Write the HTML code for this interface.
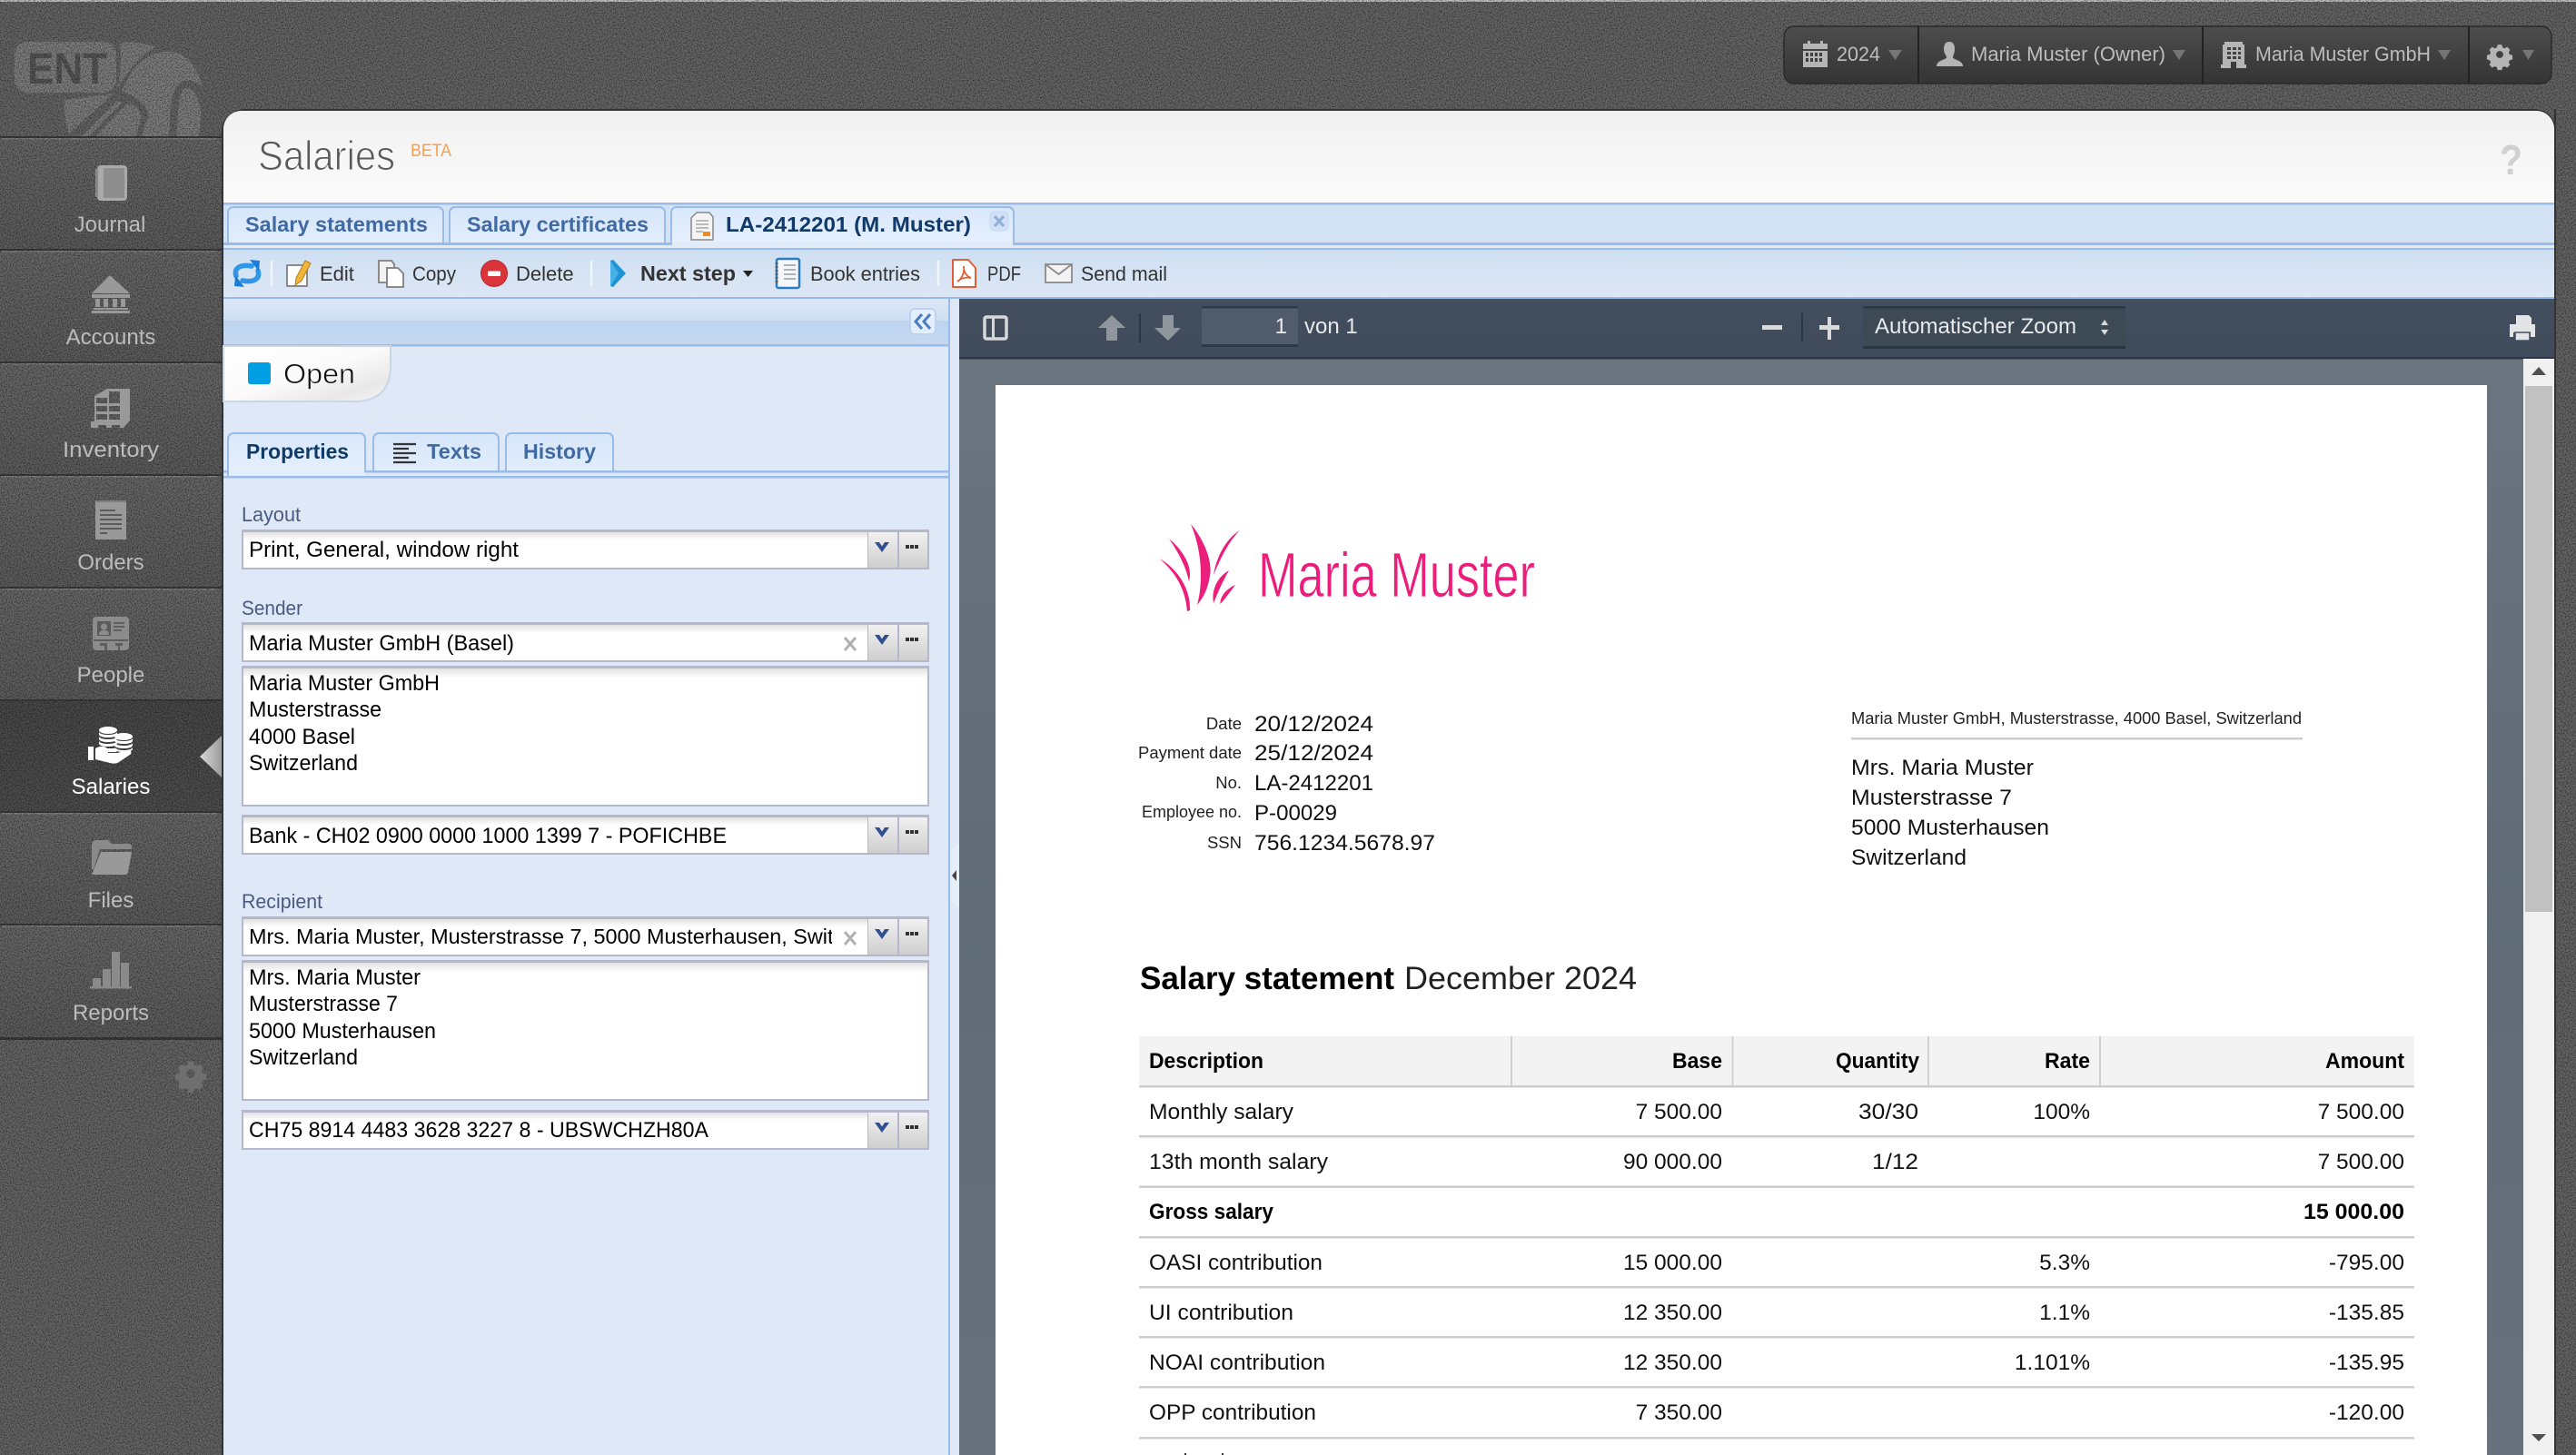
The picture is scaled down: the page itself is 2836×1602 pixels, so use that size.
<!DOCTYPE html>
<html lang="en">
<head>
<meta charset="utf-8">
<title>Salaries</title>
<style>
html,body{margin:0;padding:0;background:#555;width:2836px;height:1602px;overflow:hidden}
svg{display:block}
text{font-family:"Liberation Sans",sans-serif;white-space:pre}
.nav{font-size:24px;fill:#bcbcbc;text-anchor:middle}
.tb{font-size:22px;fill:#333}
.top{font-size:22px;fill:#bdbdbd}
.tab{font-size:23px;font-weight:bold;fill:#416aa3}
.lbl{font-size:22px;fill:#4a5a80}
.f{font-size:24px;fill:#000}
.pdf{font-size:24px;fill:#e8eaec}
.d{font-size:24.5px;fill:#111}
.r{font-size:24.5px;fill:#111;text-anchor:end}
.b{font-weight:bold;fill:#000}
.sm{font-size:18.5px;fill:#222;text-anchor:end}
</style>
</head>
<body>
<svg xmlns="http://www.w3.org/2000/svg" width="2836" height="1602" viewBox="0 0 2836 1602">
<defs>
<filter id="n" x="0" y="0" width="100%" height="100%"><feTurbulence type="fractalNoise" baseFrequency="0.7" numOctaves="2" seed="3"/><feColorMatrix values="0 0 0 0 0 0 0 0 0 0 0 0 0 0 0 0 0 0 1.2 -0.45"/></filter>
<linearGradient id="item" x1="0" y1="0" x2="0" y2="1"><stop offset="0" stop-color="#6a6a6a"/><stop offset="1" stop-color="#5e5e5e"/></linearGradient>
<linearGradient id="itemA" x1="0" y1="0" x2="0" y2="1"><stop offset="0" stop-color="#4a4a4a"/><stop offset="1" stop-color="#505050"/></linearGradient>
<linearGradient id="bar" x1="0" y1="0" x2="0" y2="1"><stop offset="0" stop-color="#4d4d4d"/><stop offset="1" stop-color="#343434"/></linearGradient>
<linearGradient id="hd" x1="0" y1="0" x2="0" y2="1"><stop offset="0" stop-color="#f1f1f1"/><stop offset=".5" stop-color="#f6f6f6"/><stop offset="1" stop-color="#fbfbfb"/></linearGradient>
<linearGradient id="tabg" x1="0" y1="0" x2="0" y2="1"><stop offset="0" stop-color="#d6e5f9"/><stop offset="1" stop-color="#e2eefd"/></linearGradient>
<linearGradient id="tabA" x1="0" y1="0" x2="0" y2="1"><stop offset="0" stop-color="#d9e8fb"/><stop offset="1" stop-color="#e6f0fe"/></linearGradient>
<linearGradient id="tool" x1="0" y1="0" x2="0" y2="1"><stop offset="0" stop-color="#cfdff2"/><stop offset="1" stop-color="#dce7f5"/></linearGradient>
<linearGradient id="h1" x1="0" y1="0" x2="0" y2="1"><stop offset="0" stop-color="#dbe7f6"/><stop offset="1" stop-color="#cfdff3"/></linearGradient>
<linearGradient id="h2" x1="0" y1="0" x2="0" y2="1"><stop offset="0" stop-color="#bdd3ee"/><stop offset="1" stop-color="#c5d9f1"/></linearGradient>
<linearGradient id="pill" x1="0" y1="0" x2="1" y2="1"><stop offset="0" stop-color="#fff"/><stop offset=".5" stop-color="#fafafa"/><stop offset=".8" stop-color="#e8e8e8"/><stop offset="1" stop-color="#f6f6f6"/></linearGradient>
<linearGradient id="inp" x1="0" y1="0" x2="0" y2="1"><stop offset="0" stop-color="#e2e2e2"/><stop offset=".22" stop-color="#fff"/><stop offset="1" stop-color="#fff"/></linearGradient>
<linearGradient id="ta" x1="0" y1="0" x2="0" y2="1"><stop offset="0" stop-color="#e2e2e2"/><stop offset=".07" stop-color="#fff"/><stop offset="1" stop-color="#fff"/></linearGradient>
<linearGradient id="btn" x1="0" y1="0" x2="0" y2="1"><stop offset="0" stop-color="#f1f1f1"/><stop offset="1" stop-color="#cfcfcf"/></linearGradient>
<linearGradient id="pv" x1="0" y1="0" x2="0" y2="1"><stop offset="0" stop-color="#6b757f"/><stop offset=".5" stop-color="#606b76"/><stop offset="1" stop-color="#68727c"/></linearGradient>
<linearGradient id="pt" x1="0" y1="0" x2="0" y2="1"><stop offset="0" stop-color="#434f5f"/><stop offset="1" stop-color="#3f4b5a"/></linearGradient>
<linearGradient id="arrow" x1="0" y1="0" x2="1" y2="0"><stop offset="0" stop-color="#d8d8d8"/><stop offset="1" stop-color="#9c9c9c"/></linearGradient>
<clipPath id="rc"><rect x="270" y="1012" width="646" height="38"/></clipPath>
<g id="fld">
<rect x="266" y="0" width="757" height="44" fill="#b5b8cc"/>
<rect x="268" y="3" width="687" height="39" fill="url(#inp)"/>
<rect x="956" y="3" width="32" height="39" fill="url(#btn)"/>
<rect x="990" y="3" width="31" height="39" fill="url(#btn)"/>
<path d="M963 14l8 11 8-11h-5l-3 4.500-3-4.500z" fill="#2f4f8f"/>
<path d="M997 17h4v4h-4zM1002 17h4v4h-4zM1007 17h4v4h-4z" fill="#333"/>
</g>
<g id="gear">
<path d="M-3-14h6l1 4 3 1.300 3.500-2 4.200 4.200-2 3.500 1.300 3 4 1v6l-4 1-1.300 3 2 3.500-4.200 4.200-3.500-2-3 1.300-1 4h-6l-1-4-3-1.300-3.500 2-4.200-4.200 2-3.500-1.300-3-4-1v-6l4-1 1.300-3-2-3.500 4.200-4.200 3.500 2 3-1.300zM0-5a5 5 0 1 0 .01 0z" fill-rule="evenodd"/>
</g>
</defs>

<!-- Background -->
<rect width="2836" height="1602" fill="#676767"/>
<rect width="2836" height="2" fill="#c8c8c8"/>

<!-- Logo -->
<g fill="#808080">
<rect x="16" y="46" width="112" height="56" rx="14"/>
<path d="M132 47C148 45 162 48 172 52C156 60 146 72 138 84L129 97C133 82 134 62 132 47z"/>
<path d="M143 82C152 66 170 56 187 57C205 58 216 70 223 96C216 90 208 86 200 90C190 96 188 112 187 128L186 156H154L163 127C164 118 152 108 134 100z"/>
<path d="M205 97C214 97 220 108 221 125L219 156H194L196 122C197 108 199 99 205 97z"/>
<path d="M71 110L125 103L76 147C72 136 70 122 71 110z"/>
<path d="M84 156L130 110L134 114L92 156z"/>
<path d="M100 156L138 116C146 112 154 120 156 128L148 156z"/>
</g>
<text x="30" y="92" font-size="48" font-weight="bold" fill="#585858" textLength="88" lengthAdjust="spacingAndGlyphs">ENT</text>

<!-- Sidebar items -->
<g>
<rect x="0" y="152" width="244" height="124" fill="url(#item)"/>
<rect x="0" y="276" width="244" height="124" fill="url(#item)"/>
<rect x="0" y="400" width="244" height="124" fill="url(#item)"/>
<rect x="0" y="524" width="244" height="124" fill="url(#item)"/>
<rect x="0" y="648" width="244" height="124" fill="url(#item)"/>
<rect x="0" y="772" width="244" height="123" fill="url(#itemA)"/>
<rect x="0" y="895" width="244" height="124" fill="url(#item)"/>
<rect x="0" y="1019" width="244" height="124" fill="url(#item)"/>
<g fill="#3c3c3c">
<rect y="150" width="244" height="2"/><rect y="274" width="244" height="2"/><rect y="398" width="244" height="2"/><rect y="522" width="244" height="2"/><rect y="646" width="244" height="2"/><rect y="770" width="244" height="2"/><rect y="893" width="244" height="2"/><rect y="1017" width="244" height="2"/><rect y="1142" width="244" height="3"/>
</g>
<g fill="#858585">
<rect x="2" y="152" width="237" height="1.500"/><rect x="2" y="276" width="237" height="1.500"/><rect x="2" y="400" width="237" height="1.500"/><rect x="2" y="524" width="237" height="1.500"/><rect x="2" y="648" width="237" height="1.500"/><rect x="2" y="895" width="237" height="1.500"/><rect x="2" y="1019" width="237" height="1.500"/>
</g>
</g>

<!-- Noise -->
<rect width="2836" height="1602" filter="url(#n)"/>

<!-- Sidebar icons -->
<g fill="#999">
<rect x="107" y="182" width="33" height="39" rx="4" fill="#aaa"/>
<rect x="114" y="185" width="23" height="33" fill="#8e8e8e"/>
<path d="M105 186h3v31h-3z" fill="#888"/>
<path d="M121 303l22 20h-42zM101 324h42v4h-42zM105 329h5v9h-5zM114 329h5v9h-5zM124 329h5v9h-5zM133 329h5v9h-5zM103 339h38v2h-38zM101 342h42v3h-42z"/>
<path d="M104 436l14-8 25 0v30l-7 6h-32zM106 438v6h12v-6zM120 431v13h12v-13zM106 447v6h12v-6zM120 447v6h12v-6zM106 456v6h12v-6zM120 456v6h12v-6z" fill-rule="evenodd"/>
<path d="M100 464h36l7-8v7l-7 8h-4v-3h-9v3h-6v-3h-9v3h-8z"/>
<rect x="105" y="553" width="34" height="41"/>
<path d="M105 551h34v3h-34z" opacity=".6"/>
<path d="M110 561h17v2h-17zM110 566h24v2h-24zM110 571h24v2h-24zM110 576h24v2h-24zM110 581h24v2h-24zM110 586h8v2h-8z" fill="#5a5a5a"/>
<path d="M106 679h32a4 4 0 0 1 4 4v29a4 4 0 0 1-4 4H106a4 4 0 0 1-4-4V683a4 4 0 0 1 4-4z" fill="#8c8c8c"/>
<rect x="107" y="684" width="15" height="16" fill="#5b5b5b"/>
<circle cx="114.500" cy="690" r="3.500" fill="#8c8c8c"/>
<path d="M109 699c0-4 2-5 5.500-5s5.500 1 5.500 5z" fill="#8c8c8c"/>
<path d="M125 685h12v2h-12zM125 689h12v2h-12zM125 693h9v2h-9zM103 704h38v2h-38zM110 708h8v8h-3v-5h-5zM127 708h8v3h-3v5h-2v-5h-3z" fill="#5e5e5e"/>
<path d="M101 930a5 5 0 0 1 5-5h13l4 4h19a3 3 0 0 1 3 3v3H110l-7 22h-2z" fill="#8a8a8a"/>
<path d="M111 938h34l-4 22a3 3 0 0 1-3 3H101z" fill="#999"/>
<path d="M102 1077h9v9h-9zM113 1067h9v19h-9zM123 1048h9v38h-9zM133 1060h9v26h-9zM99 1086h46v2.500H99z" fill="#8a8a8a"/>
</g>
<!-- Salaries icon -->
<g fill="#fff">
<ellipse cx="119" cy="804" rx="10" ry="4"/>
<path d="M109 806c1 2 5 3 10 3s9-1 10-3v3c-1 2-5 3-10 3s-9-1-10-3zM109 811c1 2 5 3 10 3s9-1 10-3v3c-1 2-5 3-10 3s-9-1-10-3zM109 816c1 2 5 3 10 3s9-1 10-3v3c-1 2-5 3-10 3s-9-1-10-3z"/>
<ellipse cx="136" cy="811" rx="10" ry="4"/>
<path d="M126 813c1 2 5 3 10 3s9-1 10-3v3c-1 2-5 3-10 3s-9-1-10-3zM126 818c1 2 5 3 10 3s9-1 10-3v3c-1 2-5 3-10 3s-9-1-10-3zM126 823c1 2 5 3 10 3s9-1 10-3v2c-1 2-5 3-10 3s-9-1-10-3z"/>
<rect x="97" y="822" width="6" height="15"/>
<path d="M105 824c5-3 10-3 13 0h9c3 0 3 4 0 4h-8v1h10l11-3c4-1 6 3 3 5l-12 8c-3 2-6 2-10 1l-16-4z"/>
</g>
<!-- active arrow -->
<path d="M244 810v46l-24-23z" fill="url(#arrow)"/>
<!-- sidebar labels -->
<text class="nav" x="121" y="255">Journal</text>
<text class="nav" x="122" y="379">Accounts</text>
<text class="nav" x="122" y="503" textLength="106" lengthAdjust="spacingAndGlyphs">Inventory</text>
<text class="nav" x="122" y="627">Orders</text>
<text class="nav" x="122" y="751">People</text>
<text class="nav" x="122" y="874" style="fill:#fff">Salaries</text>
<text class="nav" x="122" y="999">Files</text>
<text class="nav" x="122" y="1123">Reports</text>
<use href="#gear" fill="#6f6f6f" transform="translate(210 1182) scale(.95)"/>

<!-- Top right bar -->
<rect x="1964" y="29" width="845" height="63" rx="11" fill="url(#bar)" stroke="#2a2a2a" stroke-width="1.500"/>
<path d="M2112 29v63M2425 29v63M2718 29v63" stroke="#222" stroke-width="2"/>
<g fill="#b5b5b5">
<path d="M1985 48h5v-3h3v3h11v-3h3v3h5v6h-27z"/>
<path d="M1985 56h27v18h-27zM1988 58v4h3v-4zM1993 58v4h3v-4zM1998 58v4h3v-4zM2003 58v4h3v-4zM1988 64v4h3v-4zM1993 64v4h3v-4zM1998 64v4h3v-4zM2003 64v4h3v-4z" fill-rule="evenodd"/>
<path d="M2146 46c4 0 6 3 6 8 0 5-2 7-2 9 0 3 11 3 11 10h-29c0-7 11-7 11-10 0-2-3-4-3-9 0-5 2-8 6-8z"/>
<path d="M2449 46h20v3h2v22h2v4h-28v-4h2V49h2zM2452 52v3h4v-3zM2458 52v3h4v-3zM2464 52v3h3v-3zM2452 57v3h4v-3zM2458 57v3h4v-3zM2464 57v3h3v-3zM2452 62v3h4v-3zM2458 62v3h4v-3zM2464 62v3h3v-3zM2456 68v7h6v-7z" fill-rule="evenodd"/>
</g>
<use href="#gear" fill="#b5b5b5" transform="translate(2752 60) scale(.78)"/>
<g fill="#757575">
<path d="M2079 55h15l-7.500 11zM2392 55h14l-7 11zM2684 55h14l-7 11zM2777 55h13l-6.500 11z"/>
</g>
<text class="top" x="2022" y="67" textLength="48" lengthAdjust="spacingAndGlyphs">2024</text>
<text class="top" x="2170" y="67" textLength="214" lengthAdjust="spacingAndGlyphs">Maria Muster (Owner)</text>
<text class="top" x="2483" y="67" textLength="193" lengthAdjust="spacingAndGlyphs">Maria Muster GmbH</text>

<!-- Main panel -->
<path d="M244 150V1602h2570V144a24 24 0 0 0-24-24H270a26 26 0 0 0-26 30z" fill="#333"/>
<path d="M246 142a20 20 0 0 1 20-20H2792a20 20 0 0 1 20 20V1602H246z" fill="#dfe8f6"/>
<path d="M246 223V142a20 20 0 0 1 20-20H2792a20 20 0 0 1 20 20v81z" fill="url(#hd)"/>
<text x="284" y="187" font-size="45" fill="#5a5a5a" stroke="#f6f6f6" stroke-width="1.100" textLength="151" lengthAdjust="spacingAndGlyphs">Salaries</text>
<text x="452" y="172" font-size="19" fill="#f9a050" textLength="45" lengthAdjust="spacingAndGlyphs">BETA</text>
<text x="2752" y="192" font-size="46" font-weight="bold" fill="#d0d0d0" textLength="25" lengthAdjust="spacingAndGlyphs">?</text>

<!-- Tab strip -->
<rect x="246" y="223" width="2566" height="50" fill="#d3e2f5"/>
<rect x="246" y="223" width="2566" height="2.500" fill="#99bce8"/>
<rect x="246" y="267" width="2566" height="3" fill="#99bce8"/>
<rect x="246" y="270" width="2566" height="3" fill="#e1ecfb"/>
<rect x="246" y="273" width="2566" height="2.500" fill="#99bce8"/>
<path d="M251 268V234a6 6 0 0 1 6-6H482a6 6 0 0 1 6 6v34z" fill="url(#tabg)" stroke="#99bce8" stroke-width="2"/>
<path d="M495 268V234a6 6 0 0 1 6-6H726a6 6 0 0 1 6 6v34z" fill="url(#tabg)" stroke="#99bce8" stroke-width="2"/>
<path d="M739 270V234a6 6 0 0 1 6-6H1110a6 6 0 0 1 6 6v35" fill="url(#tabA)" stroke="#99bce8" stroke-width="2"/>
<rect x="740" y="266" width="375" height="6" fill="#e1ecfb"/>
<text class="tab" x="270" y="255" textLength="201" lengthAdjust="spacingAndGlyphs">Salary statements</text>
<text class="tab" x="514" y="255" textLength="200" lengthAdjust="spacingAndGlyphs">Salary certificates</text>
<text class="tab" x="799" y="255" style="fill:#123a68" textLength="270" lengthAdjust="spacingAndGlyphs">LA-2412201 (M. Muster)</text>
<!-- tab doc icon -->
<path d="M767 234h14l4 5v25h-24V240z" fill="#f4f4f4" stroke="#888" stroke-width="1.500"/>
<path d="M766 243h14M766 247h14M766 251h14M766 255h8" stroke="#999" stroke-width="1.300"/>
<rect x="774" y="255" width="8" height="5" fill="#f08a1e"/>
<rect x="1090" y="233" width="20" height="21" rx="5" fill="#d0e0f6" stroke="#c6d8f0"/>
<path d="M1095 238l10 11M1105 238l-10 11" stroke="#8fb0dd" stroke-width="3"/>

<!-- Toolbar -->
<rect x="246" y="275" width="2566" height="52" fill="url(#tool)"/>
<rect x="246" y="327" width="2566" height="2.500" fill="#99bce8"/>
<!-- refresh -->
<g fill="none" stroke="#2f97e6" stroke-width="5.500" stroke-linecap="round">
<path d="M260 304C257 294 266 291 277 293"/>
<path d="M284 298C287 308 278 311 267 309"/>
</g>
<path d="M275 286l11 1-1 12zM269 316l-11-1 1-12z" fill="#1a7ed6"/>
<path d="M299 287v28M651 287v28M1033 287v28" stroke="#f0f6fd" stroke-width="2.500"/>
<!-- edit -->
<path d="M316 292h22v23h-22z" fill="#fff" stroke="#8a8a8a" stroke-width="2" stroke-linejoin="round"/>
<path d="M336 287l6 3-10 19-7 5 1-8z" fill="#f2b43a" stroke="#b37d12" stroke-width="1"/>
<!-- copy -->
<path d="M417 287h14l3 4v20h-17z" fill="#f2f2f2" stroke="#8a8a8a" stroke-width="2"/>
<path d="M426 295h12l6 6v15h-18z" fill="#fff" stroke="#8a8a8a" stroke-width="2"/>
<!-- delete -->
<circle cx="544" cy="301" r="14.500" fill="#d9353a" stroke="#b8272c" stroke-width="1"/>
<rect x="537" y="298.500" width="14" height="5.500" rx="1" fill="#fff"/>
<!-- next -->
<path d="M672 287l3-1 14 15-14 15-3-1z" fill="#1f94d4"/>
<path d="M672 287l9 14-9 14z" fill="#47b1e6"/>
<path d="M818 298h11l-5.500 7z" fill="#222"/>
<!-- book -->
<rect x="855" y="285" width="25" height="32" rx="2" fill="#f4f6fa" stroke="#2a7dbc" stroke-width="2.500"/>
<path d="M863 292h13M863 297h13M863 302h13M863 307h13" stroke="#9a9a9a" stroke-width="1.500"/>
<path d="M855 289v24" stroke="#5c5c5c" stroke-width="3" stroke-dasharray="2 2"/>
<!-- pdf -->
<path d="M1049 286h17l8 9v21h-25z" fill="#fff" stroke="#e1603a" stroke-width="2" stroke-linejoin="round"/>
<path d="M1054 310c5-3 8-10 7-17 0 7 3 11 8 13-6-1-11 0-15 4z" fill="none" stroke="#e1603a" stroke-width="1.800"/>
<!-- mail -->
<rect x="1151" y="291" width="29" height="20" fill="#f3f3f3" stroke="#8a8a8a" stroke-width="1.800"/>
<path d="M1151 291l14.500 11 14.500-11" fill="none" stroke="#8a8a8a" stroke-width="1.800"/>
<text class="tb" x="352" y="309">Edit</text>
<text class="tb" x="454" y="309" textLength="48" lengthAdjust="spacingAndGlyphs">Copy</text>
<text class="tb" x="568" y="309">Delete</text>
<text class="tb" x="705" y="309" style="font-size:23px;font-weight:bold" textLength="105" lengthAdjust="spacingAndGlyphs">Next step</text>
<text class="tb" x="892" y="309" textLength="121" lengthAdjust="spacingAndGlyphs">Book entries</text>
<text class="tb" x="1087" y="309" textLength="37" lengthAdjust="spacingAndGlyphs">PDF</text>
<text class="tb" x="1190" y="309" textLength="95" lengthAdjust="spacingAndGlyphs">Send mail</text>

<!-- Left pane -->
<rect x="246" y="329" width="810" height="1273" fill="#dfe8f6"/>
<rect x="246" y="329" width="798" height="24" fill="url(#h1)"/>
<rect x="246" y="353" width="798" height="27" fill="url(#h2)"/>
<rect x="246" y="379" width="798" height="2.500" fill="#99bce8"/>
<rect x="1044" y="329" width="2" height="1273" fill="#99bce8"/>
<rect x="1002" y="340" width="28" height="28" rx="5" fill="#e3eefc" stroke="#bcd2ef" stroke-width="2"/>
<path d="M1015 346l-7 8 7 8M1024 346l-7 8 7 8" fill="none" stroke="#4a7cc0" stroke-width="3"/>
<path d="M1047 938a8 8 0 0 1 9-8v68a8 8 0 0 1-9-8z" fill="#e6eef9"/>
<path d="M1053 958l-5 6 5 6z" fill="#444"/>
<!-- Open pill -->
<path d="M246 381H430V402Q430 442 390 442H246z" fill="url(#pill)" stroke="#c8d6ea" stroke-width="2"/>
<rect x="273" y="399" width="25" height="24" rx="3" fill="#009fe3"/>
<text x="312" y="422" font-size="31" fill="#111" stroke="#f8f8f8" stroke-width=".6" textLength="79" lengthAdjust="spacingAndGlyphs">Open</text>
<!-- Subtabs -->
<rect x="246" y="518" width="798" height="2.500" fill="#99bce8"/>
<rect x="246" y="524" width="798" height="2.500" fill="#99bce8"/>
<path d="M251 524V483a6 6 0 0 1 6-6H396a6 6 0 0 1 6 6v37" fill="url(#tabA)" stroke="#99bce8" stroke-width="2"/>
<rect x="252" y="518" width="149" height="6" fill="#e3eefd"/>
<path d="M411 519V483a6 6 0 0 1 6-6H543a6 6 0 0 1 6 6v36z" fill="url(#tabg)" stroke="#99bce8" stroke-width="2"/>
<path d="M557 519V483a6 6 0 0 1 6-6H669a6 6 0 0 1 6 6v36z" fill="url(#tabg)" stroke="#99bce8" stroke-width="2"/>
<path d="M433 489h25M433 494h17M433 499h25M433 504h17M433 509h25" stroke="#333" stroke-width="2.200"/>
<text class="tab" x="271" y="505" style="fill:#0f3b68" textLength="113" lengthAdjust="spacingAndGlyphs">Properties</text>
<text class="tab" x="470" y="505" textLength="60" lengthAdjust="spacingAndGlyphs">Texts</text>
<text class="tab" x="576" y="505" textLength="80" lengthAdjust="spacingAndGlyphs">History</text>

<!-- Form -->
<text class="lbl" x="266" y="574" textLength="65" lengthAdjust="spacingAndGlyphs">Layout</text>
<use href="#fld" y="583"/>
<text class="f" x="274" y="613" textLength="297" lengthAdjust="spacingAndGlyphs">Print, General, window right</text>

<text class="lbl" x="266" y="677" textLength="67" lengthAdjust="spacingAndGlyphs">Sender</text>
<use href="#fld" y="685"/>
<text class="f" x="274" y="716" textLength="292" lengthAdjust="spacingAndGlyphs">Maria Muster GmbH (Basel)</text>
<path d="M930 702l12 14M942 702l-12 14" stroke="#b0b0b0" stroke-width="3"/>
<rect x="266" y="733" width="757" height="155" fill="#b5b8cc"/>
<rect x="268" y="736" width="753" height="150" fill="url(#ta)"/>
<text class="f" x="274" y="760" textLength="210" lengthAdjust="spacingAndGlyphs">Maria Muster GmbH</text>
<text class="f" x="274" y="789" textLength="146" lengthAdjust="spacingAndGlyphs">Musterstrasse</text>
<text class="f" x="274" y="819" textLength="117" lengthAdjust="spacingAndGlyphs">4000 Basel</text>
<text class="f" x="274" y="848" textLength="120" lengthAdjust="spacingAndGlyphs">Switzerland</text>

<use href="#fld" y="897"/>
<text class="f" x="274" y="928" textLength="526" lengthAdjust="spacingAndGlyphs">Bank - CH02 0900 0000 1000 1399 7 - POFICHBE</text>

<text class="lbl" x="266" y="1000" textLength="89" lengthAdjust="spacingAndGlyphs">Recipient</text>
<use href="#fld" y="1009"/>
<text class="f" x="274" y="1039" clip-path="url(#rc)" style="font-size:23.4px">Mrs. Maria Muster, Musterstrasse 7, 5000 Musterhausen, Switzerland</text>
<path d="M930 1026l12 14M942 1026l-12 14" stroke="#b0b0b0" stroke-width="3"/>
<rect x="266" y="1057" width="757" height="155" fill="#b5b8cc"/>
<rect x="268" y="1060" width="753" height="150" fill="url(#ta)"/>
<text class="f" x="274" y="1084" textLength="189" lengthAdjust="spacingAndGlyphs">Mrs. Maria Muster</text>
<text class="f" x="274" y="1113" textLength="164" lengthAdjust="spacingAndGlyphs">Musterstrasse 7</text>
<text class="f" x="274" y="1143" textLength="206" lengthAdjust="spacingAndGlyphs">5000 Musterhausen</text>
<text class="f" x="274" y="1172" textLength="120" lengthAdjust="spacingAndGlyphs">Switzerland</text>

<use href="#fld" y="1222"/>
<text class="f" x="274" y="1252" textLength="506" lengthAdjust="spacingAndGlyphs">CH75 8914 4483 3628 3227 8 - UBSWCHZH80A</text>

<!-- PDF viewer -->
<rect x="1056" y="395" width="1722" height="1207" fill="url(#pv)"/>
<rect x="1056" y="329" width="1756" height="64" fill="url(#pt)"/>
<rect x="1056" y="393" width="1756" height="2.500" fill="#2c3642"/>
<rect x="1084" y="349" width="24" height="24" rx="2" fill="none" stroke="#d6d8da" stroke-width="3.500"/>
<rect x="1092" y="349" width="3" height="24" fill="#d6d8da"/>
<path d="M1224 347l15 14h-9v14h-12v-14h-9z" fill="#8f969e"/>
<path d="M1286 375l14-14h-8v-14h-12v14h-9z" fill="#8f969e"/>
<rect x="1254" y="345" width="2" height="32" fill="#2c3642"/>
<rect x="1323" y="337" width="106" height="45" rx="2" fill="#505c6b"/>
<rect x="1323" y="337" width="106" height="2.500" fill="#2f3945"/>
<rect x="1323" y="379" width="106" height="3" fill="#2f3945"/>
<text class="pdf" x="1417" y="367" text-anchor="end">1</text>
<text class="pdf" x="1436" y="367">von 1</text>
<rect x="1940" y="358" width="22" height="5" fill="#d8dadc"/>
<rect x="1983" y="345" width="2" height="32" fill="#2c3642"/>
<path d="M2003 358h9v-9h4v9h9v5h-9v11h-4v-11h-9z" fill="#d8dadc"/>
<rect x="2051" y="337" width="289" height="47" rx="2" fill="#3e4956"/>
<rect x="2051" y="337" width="289" height="2.500" fill="#2c3642"/>
<rect x="2051" y="381" width="289" height="3" fill="#2c3642"/>
<text class="pdf" x="2064" y="367" textLength="222" lengthAdjust="spacingAndGlyphs">Automatischer Zoom</text>
<path d="M2317 352l4 6h-8zM2317 369l4-6h-8z" fill="#d8dadc"/>
<path d="M2770 347h14l3 3v7h4v14h-5v-5h-19v5h-4v-14h7z" fill="#e2e4e6"/>
<path d="M2769 366h16v9h-16z" fill="#e2e4e6" stroke="#434f5f" stroke-width="1.500"/>

<!-- Scrollbar -->
<rect x="2778" y="395" width="34" height="1207" fill="#f0f0f0"/>
<rect x="2780" y="425" width="30" height="579" fill="#c1c1c1"/>
<path d="M2795 404l8 9h-16z" fill="#505050"/>
<path d="M2787 1579h16l-8 8z" fill="#505050"/>
<rect x="2812" y="120" width="2" height="1482" fill="#333"/>

<!-- PDF page -->
<rect x="1096" y="424" width="1642" height="1178" fill="#fff"/>
<g fill="#ec1e7b">
<path d="M1276.500 615C1296 626 1311 648 1310 672L1307 673C1305 650 1296 632 1276.500 615z"/>
<path d="M1287 593C1300 604 1314 622 1309 640C1305 622 1297 608 1287 593z"/>
<path d="M1311 577C1326 595 1335 618 1332 634C1330 648 1325 658 1318 666C1325 640 1323 605 1311 577z"/>
<path d="M1364.500 584C1349 594 1339 614 1336 633C1345 612 1352 598 1364.500 584z"/>
<path d="M1353 628C1342 634 1333 648 1336 664C1341 652 1346 640 1353 628z"/>
<path d="M1360 644C1351 648 1343 656 1343.500 665C1349 659 1354 652 1360 644z"/>
</g>
<text x="1385" y="657" font-size="70" fill="#ec1e7b" stroke="#fff" stroke-width=".8" textLength="305" lengthAdjust="spacingAndGlyphs">Maria Muster</text>

<text class="sm" x="1367" y="803">Date</text>
<text class="sm" x="1367" y="835" textLength="114" lengthAdjust="spacingAndGlyphs">Payment date</text>
<text class="sm" x="1367" y="868">No.</text>
<text class="sm" x="1367" y="900" textLength="110" lengthAdjust="spacingAndGlyphs">Employee no.</text>
<text class="sm" x="1367" y="934">SSN</text>
<text class="d" x="1381" y="805" textLength="131" lengthAdjust="spacingAndGlyphs">20/12/2024</text>
<text class="d" x="1381" y="837" textLength="131" lengthAdjust="spacingAndGlyphs">25/12/2024</text>
<text class="d" x="1381" y="870" textLength="131" lengthAdjust="spacingAndGlyphs">LA-2412201</text>
<text class="d" x="1381" y="903" textLength="91" lengthAdjust="spacingAndGlyphs">P-00029</text>
<text class="d" x="1381" y="936" textLength="199" lengthAdjust="spacingAndGlyphs">756.1234.5678.97</text>

<text x="2038" y="797" font-size="18.500" fill="#222" textLength="496" lengthAdjust="spacingAndGlyphs">Maria Muster GmbH, Musterstrasse, 4000 Basel, Switzerland</text>
<rect x="2038" y="812" width="497" height="2.500" fill="#ccc"/>
<text class="d" x="2038" y="853" textLength="201" lengthAdjust="spacingAndGlyphs">Mrs. Maria Muster</text>
<text class="d" x="2038" y="886" textLength="177" lengthAdjust="spacingAndGlyphs">Musterstrasse 7</text>
<text class="d" x="2038" y="919" textLength="218" lengthAdjust="spacingAndGlyphs">5000 Musterhausen</text>
<text class="d" x="2038" y="952" textLength="127" lengthAdjust="spacingAndGlyphs">Switzerland</text>

<text x="1255" y="1089" font-size="35" font-weight="bold" fill="#000" textLength="280" lengthAdjust="spacingAndGlyphs">Salary statement</text>
<text x="1546" y="1089" font-size="35" fill="#222" textLength="256" lengthAdjust="spacingAndGlyphs">December 2024</text>

<!-- Table -->
<rect x="1254" y="1141" width="1404" height="54" fill="#f3f3f3"/>
<path d="M1664 1141v54M1907.500 1141v54M2123 1141v54M2312 1141v54" stroke="#d2d2d2" stroke-width="2"/>
<g fill="#cdcdcd">
<rect x="1254" y="1195" width="1404" height="2.500"/>
<rect x="1254" y="1250" width="1404" height="2.500"/>
<rect x="1254" y="1305.500" width="1404" height="2.500"/>
<rect x="1254" y="1361" width="1404" height="2.500"/>
<rect x="1254" y="1416" width="1404" height="2.500"/>
<rect x="1254" y="1471" width="1404" height="2.500"/>
<rect x="1254" y="1526" width="1404" height="2.500"/>
<rect x="1254" y="1582" width="1404" height="2.500"/>
</g>
<text class="d b" x="1265" y="1176" textLength="126" lengthAdjust="spacingAndGlyphs">Description</text>
<text class="r b" x="1896" y="1176" textLength="55" lengthAdjust="spacingAndGlyphs">Base</text>
<text class="r b" x="2113" y="1176" textLength="92" lengthAdjust="spacingAndGlyphs">Quantity</text>
<text class="r b" x="2301" y="1176" textLength="50" lengthAdjust="spacingAndGlyphs">Rate</text>
<text class="r b" x="2647" y="1176" textLength="87" lengthAdjust="spacingAndGlyphs">Amount</text>

<text class="d" x="1265" y="1232" textLength="159" lengthAdjust="spacingAndGlyphs">Monthly salary</text>
<text class="r" x="1896" y="1232">7 500.00</text>
<text class="r" x="2112" y="1232" textLength="66" lengthAdjust="spacingAndGlyphs">30/30</text>
<text class="r" x="2301" y="1232">100%</text>
<text class="r" x="2647" y="1232">7 500.00</text>

<text class="d" x="1265" y="1287" textLength="197" lengthAdjust="spacingAndGlyphs">13th month salary</text>
<text class="r" x="1896" y="1287">90 000.00</text>
<text class="r" x="2112" y="1287" textLength="51" lengthAdjust="spacingAndGlyphs">1/12</text>
<text class="r" x="2647" y="1287">7 500.00</text>

<text class="d b" x="1265" y="1342" textLength="137" lengthAdjust="spacingAndGlyphs">Gross salary</text>
<text class="r b" x="2647" y="1342" textLength="111" lengthAdjust="spacingAndGlyphs">15 000.00</text>

<text class="d" x="1265" y="1398" textLength="191" lengthAdjust="spacingAndGlyphs">OASI contribution</text>
<text class="r" x="1896" y="1398">15 000.00</text>
<text class="r" x="2301" y="1398">5.3%</text>
<text class="r" x="2647" y="1398">-795.00</text>

<text class="d" x="1265" y="1453" textLength="159" lengthAdjust="spacingAndGlyphs">UI contribution</text>
<text class="r" x="1896" y="1453">12 350.00</text>
<text class="r" x="2301" y="1453">1.1%</text>
<text class="r" x="2647" y="1453">-135.85</text>

<text class="d" x="1265" y="1508" textLength="194" lengthAdjust="spacingAndGlyphs">NOAI contribution</text>
<text class="r" x="1896" y="1508">12 350.00</text>
<text class="r" x="2301" y="1508">1.101%</text>
<text class="r" x="2647" y="1508">-135.95</text>

<text class="d" x="1265" y="1563" textLength="184" lengthAdjust="spacingAndGlyphs">OPP contribution</text>
<text class="r" x="1896" y="1563">7 350.00</text>
<text class="r" x="2647" y="1563">-120.00</text>

<path d="M1304 1600h2v2h-2zM1345 1600h2v2h-2z" fill="#333"/>
</svg>
</body>
</html>
